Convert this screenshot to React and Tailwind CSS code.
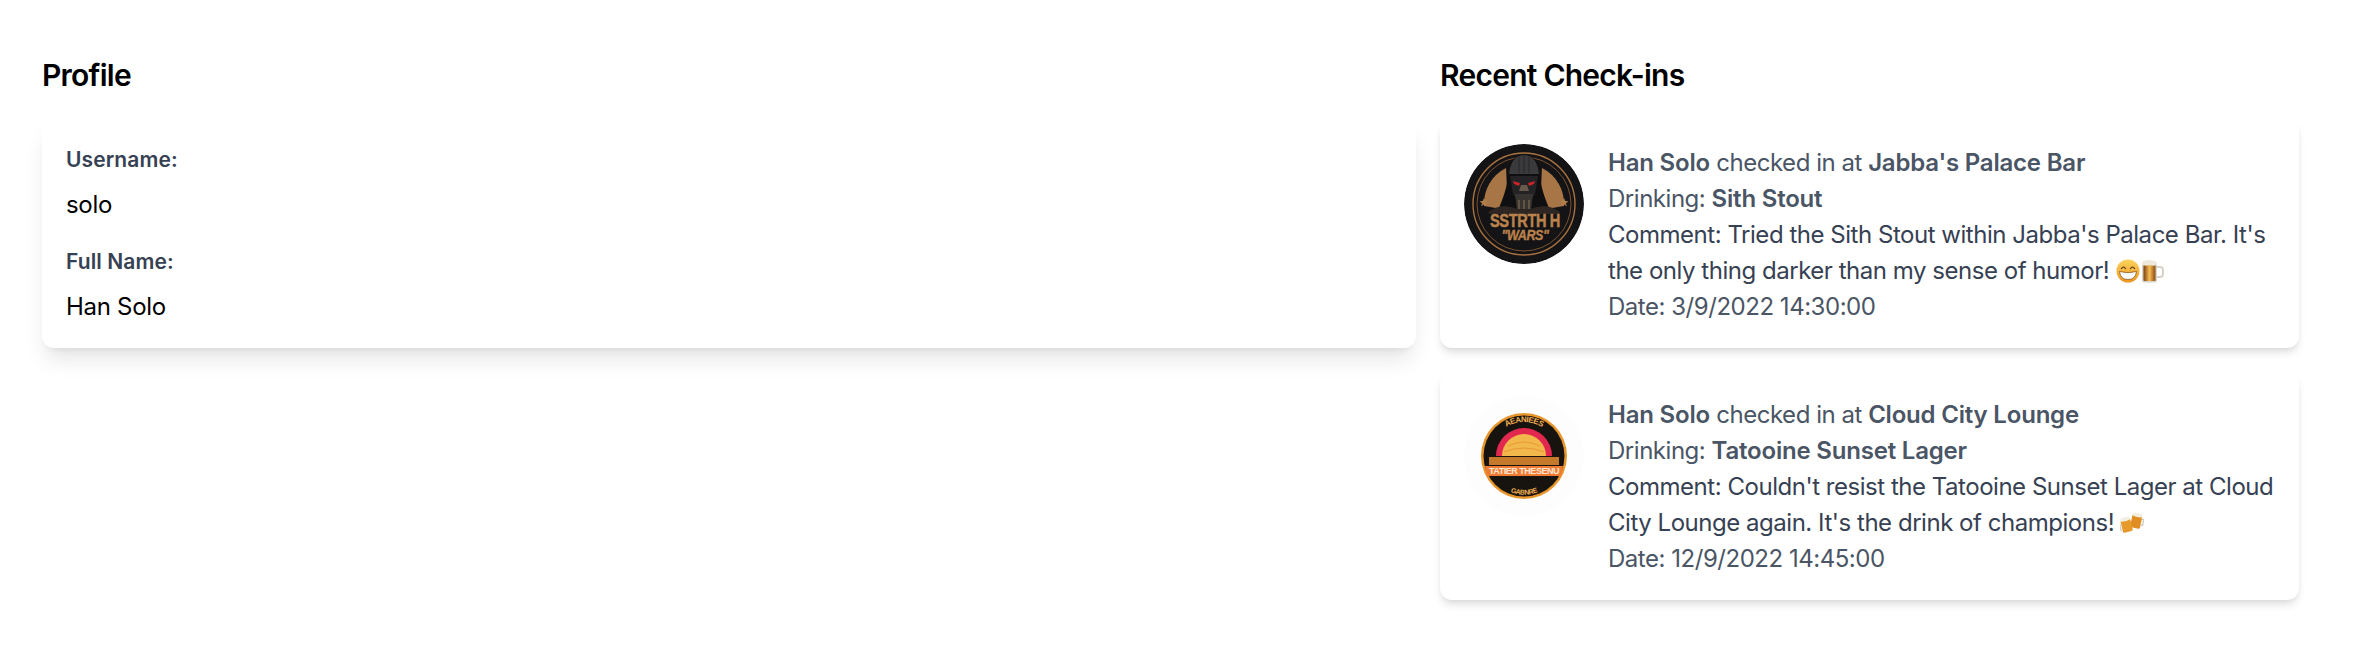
const font = { fontFamily: "Inter, 'Noto Sans', sans-serif" };

function SithBadge() {
  return (
    <svg viewBox="0 0 120 120" className="w-[120px] h-[120px] rounded-full shrink-0">
      <circle cx="60" cy="60" r="60" fill="#141316" />
      <circle cx="60" cy="60" r="51" fill="none" stroke="#a9733f" strokeWidth="1.4" />
      <circle cx="60" cy="60" r="47" fill="none" stroke="#7a5230" strokeWidth="1" />
      <path d="M20 62 A40 40 0 0 1 42 24 L44 66Z" fill="#a87546" />
      <path d="M100 62 A40 40 0 0 0 78 24 L76 66Z" fill="#a87546" />
      <path d="M60 11 C48 11 45 20 44 32 C43 44 39 54 35 64 L85 64 C81 54 77 44 76 32 C75 20 72 11 60 11Z" fill="#0f0f11" />
      <path d="M60 11 C50 11 46 20 45 30 L75 30 C74 20 70 11 60 11Z" fill="#3a3a3d" />
      <path d="M55 12V29M60 11V29M65 12V29" stroke="#26262a" strokeWidth="1" />
      <path d="M46 32 L74 32 L71 50 L63 62 L57 62 L49 50Z" fill="#232326" />
      <path d="M49 37 L56 39 L55 42 L50 40Z" fill="#c5252b" />
      <path d="M71 37 L64 39 L65 42 L70 40Z" fill="#c5252b" />
      <path d="M57 41 L63 41 L65 47 L55 47Z" fill="#6a5a4e" />
      <path d="M51 50 L69 50 L67 66 L53 66Z" fill="#38342f" />
      <path d="M55 56V66M60 56V66M65 56V66" stroke="#7a6650" strokeWidth="1.300" />
      <path d="M24 68 C34 61 44 61 53 65 L67 65 C76 61 86 61 96 68 L94 70 L26 70Z" fill="#2e2622" />
      <path d="M20 54l1.300 3 3.200.2-2.500 2 .8 3.100-2.800-1.700-2.800 1.700.8-3.100-2.500-2 3.200-.2Z" fill="#b07c4a" />
      <path d="M100 54l1.300 3 3.200.2-2.500 2 .8 3.100-2.800-1.700-2.800 1.700.8-3.100-2.500-2 3.200-.2Z" fill="#b07c4a" />
      <text x="61" y="83" textAnchor="middle" fontFamily="'Liberation Sans', sans-serif" fontWeight="700" fontSize="18" fill="#b9824c" stroke="#b9824c" strokeWidth="0.500" textLength="70" lengthAdjust="spacingAndGlyphs">SSTRTH H</text>
      <text x="61" y="96" textAnchor="middle" fontFamily="'Liberation Sans', sans-serif" fontWeight="700" fontStyle="italic" fontSize="14" fill="#b9824c" stroke="#b9824c" strokeWidth="0.400" textLength="47" lengthAdjust="spacingAndGlyphs">"WARS"</text>
    </svg>
  );
}

function SunsetBadge() {
  return (
    <svg viewBox="0 0 120 120" className="w-[120px] h-[120px] rounded-full shrink-0">
      <circle cx="60" cy="60" r="60" fill="#fdfdfd" />
      <circle cx="60" cy="60" r="43" fill="#e8962c" />
      <circle cx="60" cy="60" r="40.500" fill="#17130f" />
      <path d="M32 60 A28 28 0 0 1 88 60Z" fill="#e2284f" />
      <path d="M38 60 A22 22 0 0 1 82 60Z" fill="#f2b84b" />
      <path d="M44 50 Q60 42 76 50M40 56 Q60 48 80 56" stroke="#e8963a" strokeWidth="1" fill="none" />
      <rect x="25" y="61" width="70" height="8" fill="#c47a2a" />
      <path d="M25 60.500H95" stroke="#1a130c" strokeWidth="1.200" />
      <path d="M21 70H99L97 80H23Z" fill="#ef7a33" />
      <text x="60" y="78" textAnchor="middle" fontFamily="'Liberation Sans', sans-serif" fontWeight="700" fontSize="8.500" fill="#fde6d2" textLength="70" lengthAdjust="spacingAndGlyphs">TATIER THESENU</text>
      <path id="arcTop" d="M26 60 A34 34 0 0 1 94 60" fill="none" />
      <text fontFamily="'Liberation Sans', sans-serif" fontWeight="700" fontSize="8" fill="#f0b052">
        <textPath href="#arcTop" startOffset="50%" textAnchor="middle">AEANIEES</textPath>
      </text>
      <path id="arcBottom" d="M30 84 A38 38 0 0 0 90 84" fill="none" />
      <text fontFamily="'Liberation Sans', sans-serif" fontWeight="700" fontSize="7" fill="#f0b052">
        <textPath href="#arcBottom" startOffset="50%" textAnchor="middle">GABNRE</textPath>
      </text>
    </svg>
  );
}

function GrinEmoji() {
  return (
    <svg viewBox="0 0 24 24" className="inline-block w-[24px] h-[24px] align-[-4px]">
      <defs>
        <linearGradient id="grin" x1="0" y1="0" x2="0" y2="1">
          <stop offset="0" stopColor="#fbd45c" />
          <stop offset="1" stopColor="#ee9420" />
        </linearGradient>
      </defs>
      <circle cx="12" cy="12" r="11.500" fill="url(#grin)" />
      <path d="M5.500 9.500 Q7.500 6.500 9.500 9.500M14.500 9.500 Q16.500 6.500 18.500 9.500" stroke="#4a3313" strokeWidth="1.200" fill="none" strokeLinecap="round" />
      <path d="M3.500 12.500 Q12 15 20.500 12.500 Q19.500 20.500 12 20.500 Q4.500 20.500 3.500 12.500Z" fill="#fff" stroke="#5a3d14" strokeWidth="0.600" />
    </svg>
  );
}

function MugEmoji() {
  return (
    <svg viewBox="0 0 24 24" className="inline-block w-[24px] h-[24px] align-[-4px]">
      <defs>
        <linearGradient id="beer" x1="0" y1="0" x2="1" y2="0">
          <stop offset="0" stopColor="#7c3f0e" />
          <stop offset="0.500" stopColor="#f6bd55" />
          <stop offset="1" stopColor="#8a4a12" />
        </linearGradient>
      </defs>
      <path d="M16 8H20Q23 8 23 11V15Q23 18 20 18H16" fill="none" stroke="#d8d2c8" strokeWidth="2" />
      <rect x="2" y="4" width="15" height="19.500" rx="2" fill="#d9d2c6" />
      <rect x="3.500" y="6" width="12" height="16" rx="1" fill="url(#beer)" />
      <path d="M1.500 5.500 Q2 1 6 1.500 Q9 0 12 1.500 Q17 1 17.500 5.500 Q14 7.500 9.500 6 Q5 7.500 1.500 5.500Z" fill="#efe9dd" />
    </svg>
  );
}

function ClinkEmoji() {
  return (
    <svg viewBox="0 0 24 24" className="inline-block w-[24px] h-[24px] align-[-4px]">
      <g transform="rotate(12 16 9)">
        <rect x="11.500" y="4" width="10" height="13" rx="1.500" fill="#e08d22" />
        <path d="M11 5 Q12 1 16 2 Q21 1 22 5 Q16 7 11 5Z" fill="#f3eee2" />
        <path d="M21.500 7H23.500V13H21.500" fill="none" stroke="#cfc8bd" strokeWidth="1.300" />
      </g>
      <g transform="rotate(-14 7 14)">
        <path d="M1 12H0V18H1" fill="none" stroke="#cfc8bd" strokeWidth="1.300" />
        <rect x="1.500" y="8" width="10" height="13" rx="1.500" fill="#e79a2c" />
        <path d="M1 9 Q2 5 6 6 Q11 5 12 9 Q6 11 1 9Z" fill="#f3eee2" />
      </g>
    </svg>
  );
}

function Checkin({ badge, place, beer, comment, date }) {
  return (
    <div className="flex gap-6 bg-white rounded-[12px] shadow-[0_6px_9px_-1.500px_rgba(0,0,0,0.1),0_3px_6px_-3px_rgba(0,0,0,0.1)] p-6 text-[24px] leading-[36px] tracking-[-0.47px] text-gray-600">
      {badge}
      <div className="min-w-0 flex-1 pt-px -mb-px">
        <div><strong className="font-semibold tracking-[-0.2px]">Han Solo</strong> checked in at <strong className="font-semibold tracking-[-0.2px]">{place}</strong></div>
        <div>Drinking: <strong className="font-semibold tracking-[-0.2px]">{beer}</strong></div>
        <div className="text-gray-700">{comment}</div>
        <div>Date: {date}</div>
      </div>
    </div>
  );
}

export default function App() {
  return (
    <div className="flex gap-6 bg-white pl-[42px] pr-[61px] pt-[53px] h-[662px] text-black" style={font}>
      <section className="w-[1374px] shrink-0">
        <h2 className="text-[30px] leading-[45px] font-semibold tracking-[-0.75px] mb-[22px]">Profile</h2>
        <div className="bg-white rounded-[12px] shadow-[0_15px_22px_-4px_rgba(0,0,0,0.1),0_6px_9px_-6px_rgba(0,0,0,0.1)] p-6 h-[228px]">
          <div className="text-[21px] leading-[31.500px] font-semibold tracking-[0.1px] text-gray-700 mb-[11.500px]">Username:</div>
          <div className="text-[24px] leading-[36px] tracking-[-0.3px] mb-[23px]">solo</div>
          <div className="text-[21px] leading-[31.500px] font-semibold tracking-[0.1px] text-gray-700 mb-[11.500px]">Full Name:</div>
          <div className="text-[24px] leading-[36px] tracking-[-0.3px]">Han Solo</div>
        </div>
      </section>
      <section className="flex-1 min-w-0">
        <h2 className="text-[30px] leading-[45px] font-semibold tracking-[-0.75px] mb-[22px]">Recent Check-ins</h2>
        <div className="flex flex-col gap-6">
          <Checkin
            badge={<SithBadge />}
            place="Jabba's Palace Bar"
            beer="Sith Stout"
            comment={<>Comment: Tried the Sith Stout within Jabba's Palace Bar. It's the only thing darker than my sense of humor! <GrinEmoji /><MugEmoji /></>}
            date="3/9/2022 14:30:00"
          />
          <Checkin
            badge={<SunsetBadge />}
            place="Cloud City Lounge"
            beer="Tatooine Sunset Lager"
            comment={<>Comment: Couldn't resist the Tatooine Sunset Lager at Cloud City Lounge again. It's the drink of champions! <ClinkEmoji /></>}
            date="12/9/2022 14:45:00"
          />
        </div>
      </section>
    </div>
  );
}
